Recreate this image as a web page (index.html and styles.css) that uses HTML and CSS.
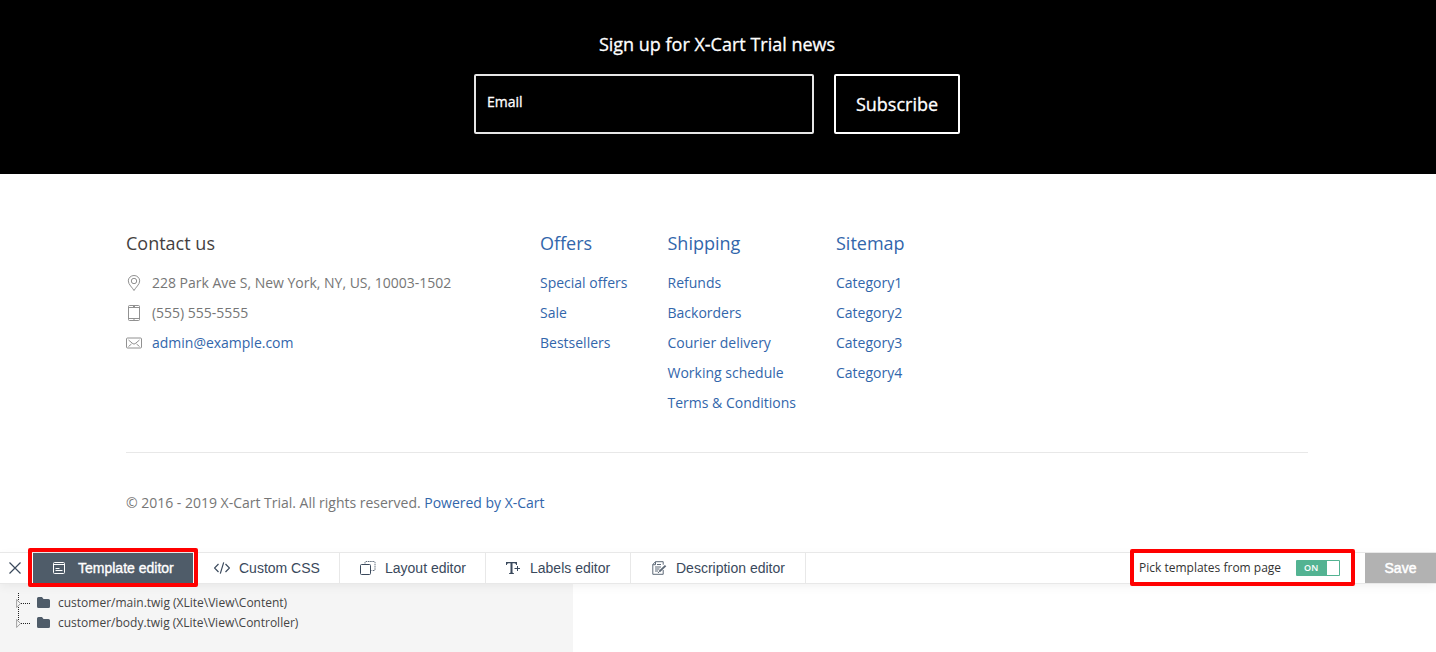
FILE: index.html
```html
<!DOCTYPE html>
<html lang="en">
<head>
<meta charset="utf-8">
<title>X-Cart Trial</title>
<link rel="stylesheet" href="styles.css">
</head>
<body>
<section class="newsletter">
  <h2 class="newsletter-title">Sign up for X-Cart Trial news</h2>
  <form class="newsletter-form">
    <div class="email-field">Email</div>
    <button class="subscribe" type="button">Subscribe</button>
  </form>
</section>
<footer class="footer">
  <div class="footer-columns">
    <section class="contact">
      <h3>Contact us</h3>
      <ul>
        <li><svg class="contact-icon" viewBox="0 0 16 16"><path d="M8 15.500C6.500 12.600 2.300 9.500 2.300 5.900a5.700 5.400 0 0 1 11.400 0C13.700 9.500 9.500 12.600 8 15.500Z"/><circle cx="8" cy="6" r="2.700"/></svg><span>228 Park Ave S, New York, NY, US, 10003-1502</span></li>
        <li><svg class="contact-icon" viewBox="0 0 16 16"><rect x="2.500" y=".5" width="11" height="15" rx="1"/><path d="M3 2.500h10M3 13.500h10M7 1.500h2M7.500 14.500h1"/></svg><span>(555) 555-5555</span></li>
        <li><svg class="contact-icon" viewBox="0 0 16 16"><rect x=".5" y="3" width="15" height="10" rx="1"/><path d="m2.500 5 4.400 3.700q1.100.7 2.200 0L13.500 5M2.500 11.500l3-2.500M13.500 11.500l-3-2.500"/></svg><a href="#">admin@example.com</a></li>
      </ul>
    </section>
    <nav class="links offers">
      <h3><a href="#">Offers</a></h3>
      <ul><li><a href="#">Special offers</a></li><li><a href="#">Sale</a></li><li><a href="#">Bestsellers</a></li></ul>
    </nav>
    <nav class="links shipping">
      <h3><a href="#">Shipping</a></h3>
      <ul><li><a href="#">Refunds</a></li><li><a href="#">Backorders</a></li><li><a href="#">Courier delivery</a></li><li><a href="#">Working schedule</a></li><li><a href="#">Terms &amp; Conditions</a></li></ul>
    </nav>
    <nav class="links">
      <h3><a href="#">Sitemap</a></h3>
      <ul><li><a href="#">Category1</a></li><li><a href="#">Category2</a></li><li><a href="#">Category3</a></li><li><a href="#">Category4</a></li></ul>
    </nav>
  </div>
  <p class="copyright">© 2016 - 2019 X-Cart Trial. All rights reserved. <a href="#">Powered by X-Cart</a></p>
</footer>
<div class="editor">
  <div class="toolbar">
    <div class="close"><svg width="12" height="12" viewBox="0 0 12 12"><path d="m.5.5 11 11m0-11-11 11"/></svg></div>
    <div class="tab tab-template">
      <svg width="12" height="12" viewBox="0 0 12 12"><rect x=".5" y=".5" width="11" height="11" rx="1"/><path d="M.5 2.500h11M2.500 6.500h4M2.500 8.500h7"/></svg><span>Template editor</span>
      <div class="mark mark-tab"></div>
    </div>
    <div class="tab tab-css">
      <svg class="code" width="16" height="12" viewBox="0 0 16 12"><path d="m4.500 2-4 4 4 4m7-8 4 4-4 4M9.700.3 6.300 11.700"/></svg><span>Custom CSS</span>
    </div>
    <div class="tab tab-layout">
      <svg width="16" height="14" viewBox="0 0 16 14"><rect x=".5" y="3.500" width="10" height="10" rx="1"/><path class="dotted" d="M5 2.500v-1q0-1 1-1h8q1 0 1 1v7q0 1-1 1h-2.500"/></svg><span>Layout editor</span>
    </div>
    <div class="tab tab-labels">
      <svg width="14" height="12" viewBox="0 0 14 12"><path class="solid" d="M0 0h11v3h-.8q-.2-1.800-1.700-1.800H6.500v9q0 1 1.500 1V12H3v-.8q1.500 0 1.500-1v-9h-2Q1 1.200.8 3H0Z"/><path d="M8.500 6.500H14M11.500 4v5"/></svg><span>Labels editor</span>
    </div>
    <div class="tab tab-description">
      <svg class="note" width="15" height="14" viewBox="0 0 15 14"><path d="M11.200 9v4.300H.8V3.500L3.500.7h7.700v3M3.500.7v3H.8M5 3.500h4M3 6h6M3 8h4.500M3 10h3"/><path class="pen" d="m7.300 10.600 6.300-6"/><path d="m6 12 1.300-1.500"/></svg><span>Description editor</span>
    </div>
    <div class="picker">
      <span>Pick templates from page</span>
      <div class="switch"><span>ON</span></div>
      <div class="mark mark-picker"></div>
    </div>
    <button class="save" type="button">Save</button>
  </div>
  <div class="tree">
    <svg class="branches" width="20" height="40" viewBox="0 0 20 40"><path class="branch" d="M2.500 0v30M5 10.500h10M5 30.500h10"/><path class="arrow" d="M.6 6.500v8l3.900-4ZM.6 26.500v8l3.900-4Z"/></svg>
    <ul>
      <li><svg width="13" height="11" viewBox="0 0 13 11"><path d="M0 1.500Q0 0 1.500 0H5l1.500 2h5Q13 2 13 3.500v6Q13 11 11.500 11h-10Q0 11 0 9.500Z"/></svg><span>customer/main.twig (XLite\View\Content)</span></li>
      <li><svg width="13" height="11" viewBox="0 0 13 11"><path d="M0 1.500Q0 0 1.500 0H5l1.500 2h5Q13 2 13 3.500v6Q13 11 11.500 11h-10Q0 11 0 9.500Z"/></svg><span>customer/body.twig (XLite\View\Controller)</span></li>
    </ul>
  </div>
</div>
</body>
</html>
```
FILE: styles.css
```css
* { box-sizing: border-box; }
body {
  margin: 0;
  height: 652px;
  overflow: hidden;
  display: flex;
  flex-direction: column;
  background: #fff;
  font: 14px/30px "Open Sans", sans-serif;
  color: #767676;
  white-space: nowrap;
}
h2, h3, p, ul { margin: 0; padding: 0; font-weight: 400; }
ul { list-style: none; }
a { color: #3266ab; text-decoration: none; }
svg { flex: none; fill: none; stroke: currentColor; }

.newsletter { height: 174px; padding-top: 29px; background: #000; color: #fff; -webkit-text-stroke: .3px; }
.newsletter-title { font-size: 18px; line-height: 30px; text-align: center; padding-right: 2px; }
.newsletter-form { display: flex; justify-content: center; gap: 20px; margin-top: 15px; padding-right: 2px; }
.email-field { width: 340px; height: 60px; padding: 11px; border: 2px solid #e6e6e6; border-radius: 2px; }
.subscribe { width: 126px; height: 60px; padding: 0; background: #000; color: #fff; border: 2px solid #fff; border-radius: 2px; font: 18px/30px "Open Sans", sans-serif; -webkit-text-stroke: .3px; }

.footer { height: 378px; padding: 54px 128px 0 126px; }
.footer-columns { display: flex; height: 225px; border-bottom: 1px solid #e8e8e8; }
.footer h3 { font-size: 18px; line-height: 30px; margin-bottom: 10px; color: #443f3f; }
.contact { width: 414px; }
.contact li { display: flex; align-items: center; gap: 10px; letter-spacing: -.01px; }
.contact-icon { width: 16px; height: 16px; color: #858585; stroke-width: .9; }
.offers { width: 127.500px; }
.shipping { width: 168.500px; }
.copyright { margin-top: 35px; letter-spacing: -.01px; }

.editor { height: 100px; position: relative; }
.toolbar { display: flex; height: 32px; background: #fff; border-top: 1px solid #e8e8e8; border-bottom: 1px solid #e8e8e8; box-shadow: 0 3px 10px rgba(0,0,0,.05); color: #3a495c; font: 14px/30px "Liberation Sans", sans-serif; position: relative; }
.close { width: 33px; display: flex; align-items: center; padding-left: 9px; stroke-width: 1.2; }
.tab { display: flex; align-items: center; border-right: 1px solid #e8e8e8; }
.tab-template { width: 161px; padding-left: 20px; gap: 13px; background: #4f5c69; color: #fff; position: relative; border-right-color: #fff; -webkit-text-stroke: .35px; }
.tab-css { width: 146px; padding-left: 20px; gap: 9px; }
.code { stroke-width: 1.2; }
.tab-layout { width: 146px; padding-left: 20px; gap: 9px; }
.tab-labels { width: 145px; padding-left: 20px; gap: 10px; }
.tab-description { width: 175px; padding-left: 21px; gap: 9px; }
.dotted { stroke-dasharray: 1.5 .7; stroke-width: .8; }
.solid { fill: currentColor; stroke: none; }
.note { color: #5d6977; }
.pen { stroke-width: 2; }
.mark { position: absolute; border: 4px solid #f00; border-radius: 2px; }
.mark-tab { left: -5px; top: -5px; width: 170px; height: 39px; z-index: 2; }
.picker { width: 225px; height: 30px; margin-left: auto; margin-right: 10px; padding-left: 9px; display: flex; align-items: center; gap: 15px; position: relative; font: 12px/30px "Open Sans", sans-serif; color: #333; }
.mark-picker { left: 0; top: -4px; width: 225px; height: 37px; }
.switch { width: 44px; height: 16px; padding-left: 8px; background: linear-gradient(#fff, #fff) right 1px center / 12px 14px no-repeat #53b392; color: #fff; border-radius: 1px; font: 600 9px/16px "Open Sans", sans-serif; }
.save { width: 71px; height: 30px; padding: 0; border: 0; background: #b2b2b2; color: #fff; font: 14px/30px "Liberation Sans", sans-serif; -webkit-text-stroke: .5px; }
.tree { display: flex; align-items: flex-start; width: 573px; height: 68px; padding: 9px 0 0 16px; background: #f5f5f5; color: #444; font: 300 12px/20px "Open Sans", sans-serif; }
.tree ul { margin-left: 1px; }
.tree li { display: flex; align-items: center; height: 20px; gap: 8px; }
.tree li svg { fill: #4f5c69; stroke: none; margin-bottom: 1px; }
.branch { stroke: #222; stroke-dasharray: 1 1; }
.arrow { stroke: #999; fill: #f5f5f5; stroke-width: .9; }
```
